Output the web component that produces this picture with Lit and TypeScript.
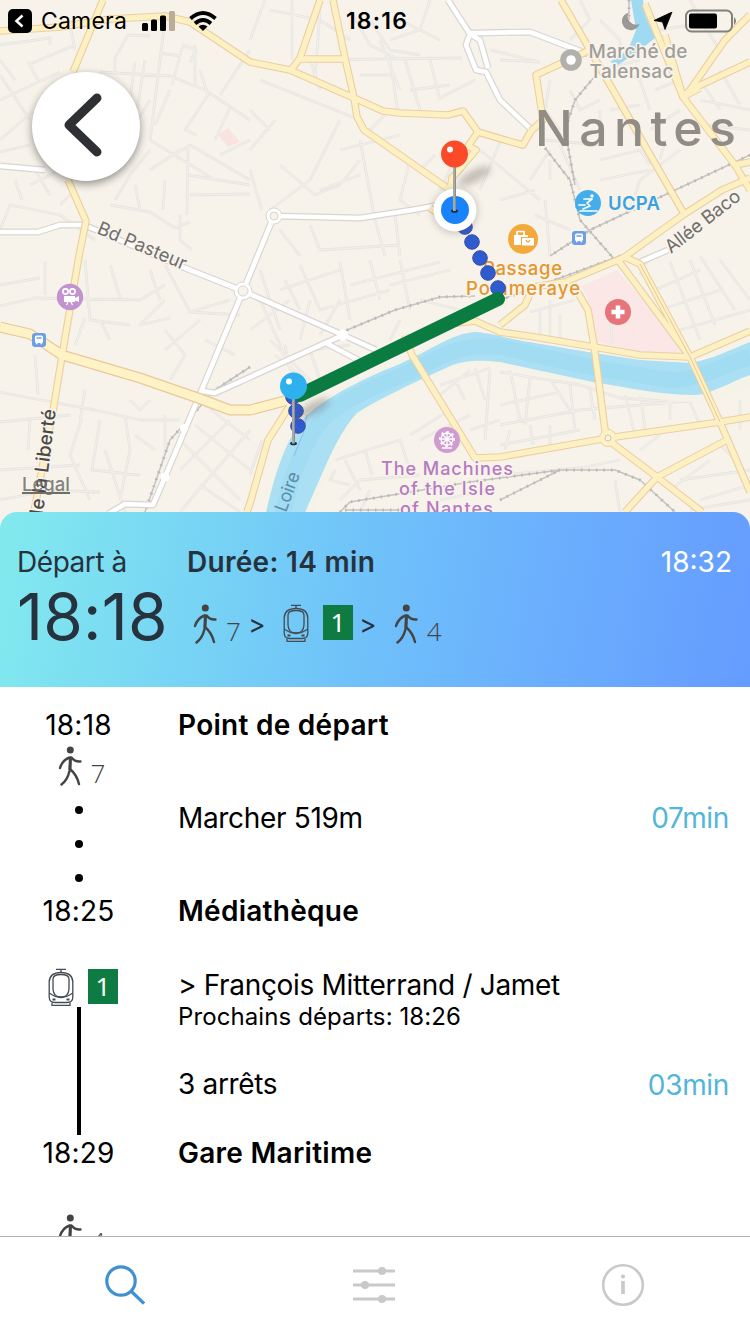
import { LitElement, html, css, svg } from "lit";
import { customElement } from "lit/decorators.js";

/* ---- Map geometry ---- */
const MINOR =
  "M0 45L50 38 50 45M28 65L75 45M28 62L38 80M0 75L30 120M0 100L60 72M0 140L32 112M0 60L15 80M70 25L75 50M115 75V58L128 35 150 36M137 110L145 60M130 100L135 62M150 140L165 20M160 53L180 56M172 85L183 45 196 50 190 62M100 72L170 76 205 90 250 120M195 45V85M170 90L155 125M200 70L208 95 185 130 197 135M250 50L220 95M215 140L230 108M150 140L215 180M165 160L190 145 250 180M188 145L187 215M188 175L250 185M190 195L250 194M220 155L250 140M165 180L163 210M135 185L140 210M110 205L150 212 175 228 190 222M180 215V240L192 250M95 240L60 215 10 205 0 230M15 180L22 200M35 170L50 195M0 152L30 145M150 150L130 175 115 200M90 180L115 170M60 205L75 190M180 150L150 170M30 185L60 170M120 150L150 100" +
  "M0 306L35 298 140 300 165 285M45 262V295M0 285L40 278M85 260L90 320 130 325M110 265L120 298M85 318L75 345M100 320L110 340M165 300L140 325 170 318M165 265L190 312 240 315M150 270L160 300M200 320L165 350M190 312L230 300M165 330L185 355 170 380M205 340L235 355M85 390L80 420M0 392L30 398 95 410 140 420 180 420M35 355L38 395M30 420L28 450M0 422L70 415M82 418L70 455 90 500M100 420L92 470 140 475M0 470L80 465M105 450L125 512M130 400L140 410 150 400M125 415L130 450 120 500M135 435L155 450M165 415V455M195 425L250 470M180 440L240 500M205 405L250 440M250 430L190 500M230 420L180 470M200 485L240 512M220 465L180 512M0 500L50 490 100 492" +
  "M292 0V60M265 0L250 40M260 80L355 118M270 10L320 20 350 40M303 60L462 58M310 60L320 90M320 10L315 80M350 10L370 45 400 60M370 20L390 50 420 55M380 40L400 90M390 60L398 112M405 60L420 110M360 75H395M410 90L450 85M430 60L440 100M370 130L390 110M340 120L310 180 270 210M250 170L262 210M270 130L250 110M250 150L275 120M280 165L315 195 340 185 360 160M320 190L360 175M360 140L375 220M340 150L400 135M310 225L320 250 400 245M375 220L385 256M280 230L300 256M395 215L400 256M410 160L400 200 420 215M435 155L420 170M460 150L440 190M480 150L540 200M500 142L480 190M400 20L440 40M430 0L420 30 390 40M490 50L540 62M475 80L440 98" +
  "M500 60L540 62M550 80L545 110 560 130M570 90L580 110 600 100M620 70L640 80 650 110M655 90L680 80M640 60L600 70M610 110L640 105M650 130L680 110M700 100L750 110M705 125L750 130M700 20L720 50M550 150L530 180M545 140L600 145M560 145L580 190M600 160L640 150 650 165M600 180L650 170M630 210L640 180 680 150M500 200L535 190M545 200L550 256M535 215L570 230M550 180V160M600 110V145M620 60V40L600 20M580 0L590 20 570 40M665 140L660 160M690 0L705 25M660 30L690 25M720 70L740 105M700 80L720 110" +
  "M260 300L300 390M280 290L340 270M300 310L285 280M300 265L320 310 390 290M340 262L350 320M370 260L380 300M270 340L310 380M250 330L290 300M285 345L290 370M310 300L300 340M340 300L320 335M350 285L440 262M400 260L410 310M390 285L450 270M420 300L460 310M400 320L390 340M320 380L310 350 350 345M275 355L300 375M260 270L280 330" +
  "M640 275L650 256M655 290L700 270M660 310L720 290M680 330L750 310M670 262L700 340M690 260L715 325M700 256L735 310M720 260L750 300M540 310V335M550 300V338M530 312L575 300M560 315V340M610 300L612 345" +
  "M500 372L580 385 620 398 680 402M500 425L580 410 700 400M510 370L520 420M530 378L525 425M550 380L570 410M570 385L575 430M590 390L595 420M625 395L635 435M500 405L560 392M640 390L645 430M670 400V420M690 402L700 425M500 445L580 430M510 430L505 450M530 425L533 445M550 425V445M500 475L580 468 620 460M640 450L660 435M720 445L735 460M680 480L750 470M700 500L750 485M670 490L710 460M615 480L620 512M690 510L750 500M740 400V430M700 380L750 360" +
  "M335 460L400 440 410 470M345 460L360 490M365 450L372 475M410 435L450 410M420 440L470 415M335 470L330 480 350 485M440 395L470 370M440 385L490 368M455 380L465 400M475 368L485 400M490 370L485 440M470 430L500 420M250 475L262 440M340 500L360 480 420 475M360 512L370 490M440 500L490 490";
const RAIL = [
  "M620 256L500 300M750 155L590 230 550 256M545 148L570 180 580 220 615 260M600 70L575 100 565 130 575 185M629 0V20M340 333L395 310 440 297 475 296",
  "M340 512L350 502 470 482 500 478 560 470 615 470 640 480 675 512M500 500L560 470M250 367L215 390 170 440 145 512M345 510H400"
];
const WHITE = [
  "M0 166L45 170", "M0 232H38L60 225H84L96 230 185 268 243 291 343 335 376 350",
  "M243 291L274 216 360 218 412 210 440 205", "M343 335L215 393 202 391",
  "M243 291L200 394 165 477 153 505 125 504 108 514", "M326 343L360 361",
  "M448 0L470 34 466 45 476 70 486 72 500 100 535 133", "M470 33H475L530 32 588 54", "M470 34L480 40 488 68", "M640 262L668 250"
];
const YELLOW = [
  "M103 0L73 72M68 180L86 221 79 256 63 350 54 405 34 512",
  "M0 31L60 27 110 19 165 16 190 22 250 62 290 70 354 98 383 111 400 113 448 115 463 111 478 132 505 140 523 145 531 131",
  "M320 0L300 58 291 70", "M333 0L345 58 354 98 357 117 364 130 450 190", "M300 59H345",
  "M478 132L468 146 476 150 452 178 450 190", "M430 208L465 232",
  "M561 0L590 50 683 212", "M590 50L536 75 543 120 531 131", "M645 4L683 97 735 165 750 162",
  "M750 15L725 40 690 90 683 97 665 35", "M750 62L690 90", "M683 97L700 88",
  "M500 325L525 305 533 287 565 282 623 258 683 215 722 190 750 178",
  "M573 284L588 310 594 345 606 438", "M300 394L400 345 440 325 475 321 500 332 535 337 594 347 640 355 690 357 750 331",
  "M618 260L690 357M625 257L640 264 690 357 720 422 750 492", "M405 335L412 355 475 458 500 457 608 438 720 422 750 417",
  "M608 440L657 477 702 512", "M727 440L657 477 625 512", "M296 396L268 440 251 500 247 512", "M735 165L750 190"
];
const MAIN = "M0 327L30 334 62 355 140 378 198 398 230 410 250 410 300 397";

const pin = (x: number, y: number, len: number, c: string) => svg`
  <ellipse cx=${x + 20} cy=${y + 22} rx="18" ry="6" transform="rotate(-28 ${x + 20} ${y + 22})" fill="#554c44" opacity=".32" filter="url(#soft)"/>
  <ellipse cx=${x} cy=${y + len} rx="3.5" ry="1.8" fill="#183047"/>
  <path d="M${x} ${y + 8}V${y + len}" stroke="#8e8e8c" stroke-width="3"/><path d="M${x - 0.5} ${y + 8}V${y + len}" stroke="#c4c4c0" stroke-width="1"/>
  <circle cx=${x} cy=${y} r="13.5" fill=${c}/><circle cx=${x - 4.5} cy=${y - 4.5} r="3" fill="#fff"/>`;

@customElement("transit-map")
class TransitMap extends LitElement {
  static styles = css`
    :host { display: block; height: 530px; overflow: hidden; }
    svg { display: block; }
    text { font-family: Inter, "Liberation Sans", sans-serif; }
    .halo { paint-order: stroke; stroke: #f8f4ec; stroke-width: 3px; stroke-linejoin: round; }
  `;
  render() {
    return html`<svg width="750" height="530" viewBox="0 0 750 530" fill="none" stroke-linejoin="round">
      <defs><filter id="soft" x="-50%" y="-100%" width="200%" height="300%"><feGaussianBlur stdDeviation="3.5"/></filter></defs>
      <rect width="750" height="530" fill="#f7f3eb"/>
      <path d="M582 286L617 270 690 354 660 357 597 342 592 310Z" fill="#fae7e6"/>
      <path d="M218 135L228 128 240 142 228 147Z" fill="#f8e3e1"/>
      <path d=${MINOR} stroke="#e7e5e1" stroke-width="2.800"/>
      <path d=${MINOR} stroke="#f2efea" stroke-width="1.200"/>
      <path d="M261 530C272 480 280 438 302 414C330 390 370 374 400 361C440 341 452 333 475 332C500 334 510 340 535 343L594 353 640 360 690 363C710 360 730 348 750 340V388C730 394 712 401 695 402C660 402 630 393 593 386L500 366C480 364 465 364 450 370C420 384 380 402 362 418C340 440 332 470 305 530Z" fill="#f5f3e7"/>
      <path d="M262 530C273 480 284 440 306 416C334 391 375 374 400 364C440 345 452 334 475 332C500 334 510 340 535 343L594 353 640 360 690 363C710 360 730 350 750 342V375C730 382 712 394 695 395C660 395 630 388 593 382L500 362C480 360 465 360 450 366C420 380 380 398 357 413C335 437 325 470 297 530Z" fill="#abdff4"/>
      <path d="M279 530C290 480 300 445 325 417C350 394 390 382 420 367C450 350 470 344 500 347L594 368 670 380C700 380 720 366 750 357" stroke="#9ddaf1" stroke-width="16" opacity=".6"/>
      <path d="M307 415C302 440 306 425 294 456" stroke="#86bfe6" stroke-width="1"/>
      <path d="M631 0H643L645 15 655 38 640 50 618 65 610 62 628 50 636 30Z" fill="#a0daf2"/>
      ${RAIL.map(d => svg`<path d=${d} stroke="#c4c3c1" stroke-width="1.5"/><path d=${d} stroke="#b9b8b6" stroke-width="3" stroke-dasharray="1.5 6"/>`)}
      ${WHITE.map(d => svg`<path d=${d} stroke="#d9d5d2" stroke-width="7"/>`)}
      <circle cx="243" cy="291" r="9" fill="#fff" stroke="#d9d5d2"/><circle cx="274" cy="216" r="8" fill="#fff" stroke="#d9d5d2"/>
      ${WHITE.map(d => svg`<path d=${d} stroke="#fff" stroke-width="4.6"/>`)}
      <circle cx="243" cy="291" r="5" fill="#f7f3eb" stroke="#d9d5d2"/><circle cx="274" cy="216" r="4" fill="#f7f3eb" stroke="#d9d5d2"/>
      <circle cx="343" cy="335" r="5.5" fill="#fff"/><circle cx="165" cy="477" r="4.5" fill="#fff"/><circle cx="184" cy="428" r="4" fill="#fff"/>
      ${YELLOW.map(d => svg`<path d=${d} stroke="#ebcfa0" stroke-width="7.600"/>`)}
      <path d=${MAIN} stroke="#ebc898" stroke-width="11"/>
      <circle cx="608" cy="438" r="8.5" fill="#fdf3c6" stroke="#ebcfa0"/>
      ${YELLOW.map(d => svg`<path d=${d} stroke="#fdf1c4" stroke-width="5.4"/>`)}
      <path d=${MAIN} stroke="#fdf3c6" stroke-width="8.6"/>
      <circle cx="608" cy="438" r="3" fill="#f7f3eb" stroke="#d8c9a0"/>
      <path d="M640 264L690 357 720 422" stroke="#e7c894" stroke-width="1"/>

      <circle cx="571" cy="60" r="7.8" fill="#fff" stroke="#b2b0ac" stroke-width="6"/>
      <g class="halo" fill="#a09d9a" font-size="19" font-weight="500">
        <text x="588.5" y="58" textLength="99">Marché de</text><text x="589.5" y="78" textLength="84">Talensac</text>
      </g>
      <text x="535" y="146" font-size="50" font-weight="500" fill="#918c86" textLength="201">Nantes</text>

      <circle cx="588" cy="203" r="13" fill="#45aeea"/>
      <g stroke="#fff" stroke-width="2" stroke-linecap="round"><path d="M584 199H592M592 199L587 203 590 206 583 209M579 205H585M580 211H597" stroke-width="1.7"/></g><circle cx="592" cy="196" r="1.7" fill="#fff"/>
      <text class="halo" x="608" y="210" font-size="18.5" font-weight="600" fill="#3aa3de" textLength="52">UCPA</text>
      <circle cx="523" cy="239" r="15" fill="#f4a93c"/>
      <path d="M514 235H528V237H521V245H514ZM522 238H534V245.500H522Z" fill="#fff"/><path d="M517 235V231.500H524V235" stroke="#fff" stroke-width="1.7"/><path d="M526 240Q528 244 530 240" stroke="#f4a93c" stroke-width="1.3"/>
      <g class="halo" fill="#e3972e" font-size="18.500" font-weight="500">
        <text x="483" y="275" textLength="79">Passage</text><text x="466" y="295" textLength="114">Pommeraye</text>
      </g>
      ${[[579, 238], [39, 340]].map(([x, y]) => svg`<rect x=${x - 7} y=${y - 7} width="14" height="14" rx="3" fill="#6d9fe6"/><rect x=${x - 4} y=${y - 4.5} width="8" height="7.500" rx="1.500" fill="#fff"/><path d="M${x - 2.5} ${y - 2}H${x + 2.5}" stroke="#6d9fe6" stroke-width="1.500"/><path d="M${x - 3} ${y + 3.5}H${x - 1.5}M${x + 1.5} ${y + 3.5}H${x + 3}" stroke="#fff" stroke-width="1.500"/>`)}
      <circle cx="618" cy="312" r="13" fill="#e6747b"/><path d="M618 305.500V318.500M611.500 312H624.500" stroke="#fff" stroke-width="4.600"/>
      <circle cx="70" cy="297" r="13.200" fill="#c393cf"/>
      <circle cx="65.500" cy="291.500" r="2.600" stroke="#fff" stroke-width="1.700"/><circle cx="72.500" cy="291.500" r="2.600" stroke="#fff" stroke-width="1.700"/><path d="M64 296H75V302H64ZM75 298L79 296V302L75 300.500Z" fill="#fff"/><path d="M68 302L66.500 305M71 302L72.500 305" stroke="#fff" stroke-width="1.300"/>
      <circle cx="447" cy="440" r="13" fill="#cf9bd0"/>
      <g stroke="#fff" stroke-width="1.300"><circle cx="447" cy="439" r="6"/><path d="M447 431V447M439 439H455M441.500 433.500L452.500 444.500M452.500 433.500L441.500 444.500M442 448H452"/></g><circle cx="447" cy="439" r="7.300" stroke="#fff" stroke-width="1.500" stroke-dasharray="1.800 3.900"/>
      <g class="halo" fill="#b57ac0" font-size="18" font-weight="500">
        <text x="381" y="475" textLength="132">The Machines</text><text x="399" y="495" textLength="96">of the Isle</text><text x="400" y="515" textLength="93">of Nantes</text>
      </g>
      <g class="halo" fill="#716e6c" font-size="18.500">
        <text transform="translate(96 233) rotate(23)" textLength="95">Bd Pasteur</text>
        <text transform="translate(671 254) rotate(-38)" textLength="90">Allée Baco</text>
      </g>
      <text transform="translate(286 513) rotate(-70)" font-size="18" fill="#5d8cac" textLength="41">Loire</text>
      <text class="halo" transform="translate(42 522) rotate(-83)" font-size="19" font-weight="500" fill="#4d4947" textLength="113">de la Liberté</text>
      <text x="22" y="491" font-size="18.500" font-weight="500" fill="#6f6d6a" fill-opacity=".85" textLength="48">Legal</text><path d="M22 493H70" stroke="#6f6d6a" stroke-width="2"/>

      ${[[465, 227], [472, 242], [480, 258], [488, 273], [498, 288], [293, 397], [296, 411], [298, 426]].map(([x, y]) => svg`<circle cx=${x} cy=${y} r="7.300" fill="#2f5bd0" stroke="#3a4da2" stroke-width="1"/>`)}
      <path d="M498 299L300 395" stroke="#0b7c41" stroke-width="14" stroke-linecap="round"/>
      <circle cx="455" cy="211" r="23" fill="#554c44" opacity=".25" filter="url(#soft)"/>
      <circle cx="455" cy="210" r="21.500" fill="#fff"/><circle cx="455" cy="210" r="14" fill="#1a82fb"/>
      ${pin(454.5, 154, 57, "#fc4a28")}
      ${pin(293.5, 386, 57.5, "#2fb1f0")}
    </svg>`;
  }
}

@customElement("status-bar")
class StatusBar extends LitElement {
  static styles = css`
    :host { display: grid; grid-template-columns: 1fr auto 1fr; height: 42px; align-items: center; padding: 0 12px 0 8px; box-sizing: border-box; font: 400 23px Inter, "Liberation Sans", sans-serif; color: #000; }
    .side { display: flex; align-items: center; }
    .end { justify-content: flex-end; }
    .camera { margin: 0 15px 0 9px; letter-spacing: 0.2px; }
    .wifi { margin-left: 14px; }
    .clock { font-weight: 600; letter-spacing: 1.2px; padding-left: 8px; }
    .arrow { margin: 0 12px 0 13px; }
  `;
  render() {
    return html`
      <div class="side">
        <svg width="24" height="24"><rect width="24" height="24" rx="5"/><path d="M14.500 6.500L8.500 12l6 5.500" fill="none" stroke="#fff" stroke-width="2.600"/></svg>
        <span class="camera">Camera</span>
        <svg width="33" height="20"><rect y="12" width="6" height="8" rx="1.500"/><rect x="9" y="8.500" width="6" height="11.500" rx="1.500"/><rect x="18" y="4.500" width="6" height="15.500" rx="1.500"/><rect x="27" y="0" width="6" height="20" rx="1.500" fill="#b9ae98"/></svg>
        <svg class="wifi" width="28" height="20" viewBox="0 0 28 20" fill="none" stroke="#000" stroke-width="3.800"><path d="M1.500 7.500Q14-3.500 26.500 7.500"/><path d="M6 12.500Q14 5.500 22 12.500"/><path d="M14 20L9.500 15.500Q14 12 18.500 15.500Z" fill="#000" stroke="none"/></svg>
      </div>
      <span class="clock">18:16</span>
      <div class="side end">
        <svg width="19" height="20" viewBox="0 0 20 20"><path d="M7 1A9.500 9.500 0 1 0 18.500 13A8.800 8.800 0 0 1 7 1Z" fill="#9a9997"/></svg>
        <svg class="arrow" width="19" height="18"><path d="M18 0L11 17.500 8.500 10 0 8.500Z" stroke="#000" stroke-width=".8" stroke-linejoin="round"/></svg>
        <svg width="53" height="24"><rect x="1" y="1.500" width="46" height="21" rx="5.500" fill="none" stroke="#84807a" stroke-width="2"/><rect x="4" y="4.500" width="28" height="15" rx="2"/><path d="M49 8Q53 12 49 16Z" fill="#84807a"/></svg>
      </div>`;
  }
}

const walker = html`<svg width="24" height="40" viewBox="0 0 24 40" fill="none" stroke="#444" stroke-width="2.400" stroke-linecap="round" stroke-linejoin="round"><circle cx="12.300" cy="4" r="3.500" fill="#444" stroke="none"/><path d="M2 22Q4.500 14 11.500 11.500L13.500 11.500Q17 16 22.500 15.500M12.500 12Q12 22 11.500 25Q9.500 34 3.500 38.500M12 23Q19 29 21 38"/><path d="M12.300 13L12 23" stroke-width="3"/></svg>`;
const tram = html`<svg width="26" height="38" viewBox="0 0 26 38" fill="none" stroke="#444b52" stroke-width="1.300"><path d="M8 1.300H18M13 1.300V4.500"/><path d="M1.200 14Q1.500 4.500 13 4.500T24.800 14V29Q24.800 34.500 19 34.500H7Q1.200 34.500 1.200 29Z"/><path d="M5 11Q5 6.500 13 6.500T21 11V21Q20.500 29 13 29T5 21Z"/><path d="M1.200 25Q8 29.500 13 29.500T24.800 25M4 34.500V37.300H22V34.500"/><path d="M4.500 31.500H7.500M18.500 31.500H21.500" stroke-width="1.800"/></svg>`;

@customElement("leg-badge")
class LegBadge extends LitElement {
  static properties = { kind: {}, value: {} };
  declare kind: string;
  declare value: string;
  static styles = css`
    :host { display: flex; font: 400 26px "Open Sans", sans-serif; color: #444; }
    svg { display: block; }
    .walk { display: flex; gap: 9px; height: 40px; }
    .minutes { font-weight: 360; line-height: 36px; padding-top: 9px; height: 36px; }
    .tram { display: flex; gap: 14px; height: 38px; }
    .line { width: 30px; height: 35px; margin-top: 1px; background: #0e7c42; color: #fff; text-align: center; line-height: 35px; font-family: "Noto Sans", sans-serif; }
  `;
  render() {
    return this.kind === "walk"
      ? html`<div class="walk">${walker}<span class="minutes">${this.value}</span></div>`
      : html`<div class="tram">${tram}<span class="line">${this.value}</span></div>`;
  }
}

@customElement("app-root")
class AppRoot extends LitElement {
  static styles = css`
    :host { display: flex; flex-direction: column; position: relative; width: 750px; height: 1334px; overflow: hidden; background: #fff; font: 400 28px/34px Inter, "Liberation Sans", sans-serif; color: #000; }
    .overlay { position: absolute; top: 0; left: 0; width: 750px; }
    .back { display: grid; place-items: center; width: 108px; height: 109px; margin: 30px 0 0 32px; border-radius: 50%; background: #fff; box-shadow: 0 3px 8px rgba(0,0,0,.42); }
    .back svg { margin: 0 7px 3px 0; }
    .summary { position: relative; flex: none; box-sizing: border-box; height: 175px; margin-top: -18px; padding: 33px 18px 0 17px; border-radius: 17px 17px 0 0; background: linear-gradient(100deg, #82eaee 0%, #70c4f9 46%, #6bb0fd 70%, #659cff 100%); color: #26323d; display: grid; grid-template-columns: 170px 1fr auto; grid-template-rows: 34px 74px; }
    .label { letter-spacing: -.45px; }
    .duration { font-weight: 600; letter-spacing: .3px; }
    .arrival { color: #fff; }
    .big { font-size: 64px; line-height: 75px; letter-spacing: 0.2px; }
    .legs { display: flex; align-items: flex-start; padding: 25px 0 0 6px; }
    .sep { font-size: 26px; line-height: 42px; width: 18px; text-align: center; color: #26323d; }
    .s1 { margin: 0 17px 0 7px; }
    .s2 { margin: 0 17px 0 6px; }
    .steps { flex: none; height: 549px; overflow: hidden; padding-top: 21px; box-sizing: border-box; }
    .row { display: grid; grid-template-columns: 157px 1fr auto; column-gap: 21px; padding-right: 21px; letter-spacing: -.33px; }
    .time { text-align: center; letter-spacing: .2px; }
    .name { font-weight: 600; letter-spacing: .27px; }
    .rail { display: flex; flex-direction: column; align-items: center; letter-spacing: 0; }
    .walkleg { height: 152px; align-items: center; }
    .walkleg .rail { height: 148px; padding-top: 4px; }
    .badge { padding-left: 6px; }
    .dots { display: flex; flex-direction: column; gap: 26px; padding-top: 20px; }
    .dot { width: 8px; height: 8px; border-radius: 50%; background: #000; }
    .tramleg { height: 208px; }
    .tramleg .rail { padding-top: 40px; height: 167px; }
    .trambadge { padding-left: 9px; }
    .bar { width: 4px; flex: 1; background: #000; margin-top: 1px; }
    .detail { padding-top: 40px; }
    .next { font-size: 24px; line-height: 30px; letter-spacing: .1px; }
    .stops { margin-top: 35px; }
    .took { color: #53b5d9; }
    .low { align-self: end; padding-bottom: 34px; }
    .last .rail { padding-top: 44px; }
    .tabs { flex: 1; border-top: 1px solid #b2b2b2; display: grid; grid-template-columns: repeat(3, 1fr); place-items: center; padding: 0 2px 2px 0; }
  `;
  render() {
    return html`
      <transit-map></transit-map>
      <div class="overlay">
        <status-bar></status-bar>
        <div class="back"><svg width="40" height="66" viewBox="0 0 40 66" fill="none" stroke="#2f3033" stroke-width="9" stroke-linecap="round" stroke-linejoin="round"><path d="M34 6L6 33 34 60"/></svg></div>
      </div>
      <section class="summary">
        <span class="label">Départ à</span><span class="duration">Durée: 14 min</span><span class="arrival">18:32</span>
        <span class="big">18:18</span>
        <div class="legs">
          <leg-badge kind="walk" value="7"></leg-badge><span class="sep s1">&gt;</span>
          <leg-badge kind="tram" value="1"></leg-badge><span class="sep s2">&gt;</span>
          <leg-badge kind="walk" value="4"></leg-badge>
        </div>
      </section>
      <section class="steps">
        <div class="row"><span class="time">18:18</span><span class="name">Point de départ</span></div>
        <div class="row walkleg">
          <div class="rail"><leg-badge class="badge" kind="walk" value="7"></leg-badge>
            <div class="dots"><i class="dot"></i><i class="dot"></i><i class="dot"></i></div></div>
          <span>Marcher 519m</span><span class="took">07min</span>
        </div>
        <div class="row"><span class="time">18:25</span><span class="name">Médiathèque</span></div>
        <div class="row tramleg">
          <div class="rail"><leg-badge class="trambadge" kind="tram" value="1"></leg-badge><div class="bar"></div></div>
          <div class="detail"><div class="dest">&gt; François Mitterrand / Jamet</div><div class="next">Prochains départs: 18:26</div><div class="stops">3 arrêts</div></div>
          <span class="took low">03min</span>
        </div>
        <div class="row"><span class="time">18:29</span><span class="name">Gare Maritime</span></div>
        <div class="row last"><div class="rail"><leg-badge class="badge" kind="walk" value="4"></leg-badge></div></div>
      </section>
      <nav class="tabs">
        <svg width="40" height="40" viewBox="0 0 40 40" fill="none" stroke="#4191cf" stroke-width="3.200"><circle cx="16" cy="16" r="14.200"/><path d="M26 26L39 38.500"/></svg>
        <svg width="44" height="38" viewBox="0 0 44 38" fill="none" stroke="#c9c9c9" stroke-width="3"><path d="M1 5H43M1 19H43M1 33H43"/><g fill="#c9c9c9" stroke="none"><circle cx="30" cy="5" r="4"/><circle cx="13" cy="19" r="4"/><circle cx="30" cy="33" r="4"/></g></svg>
        <svg width="44" height="44" viewBox="0 0 44 44" fill="none" stroke="#c9c9c9" stroke-width="2.600"><circle cx="22" cy="22" r="19.800"/><path d="M22 18V31" stroke-width="3.600"/><circle cx="22" cy="13.500" r="2.100" fill="#c9c9c9" stroke="none"/></svg>
      </nav>`;
  }
}
